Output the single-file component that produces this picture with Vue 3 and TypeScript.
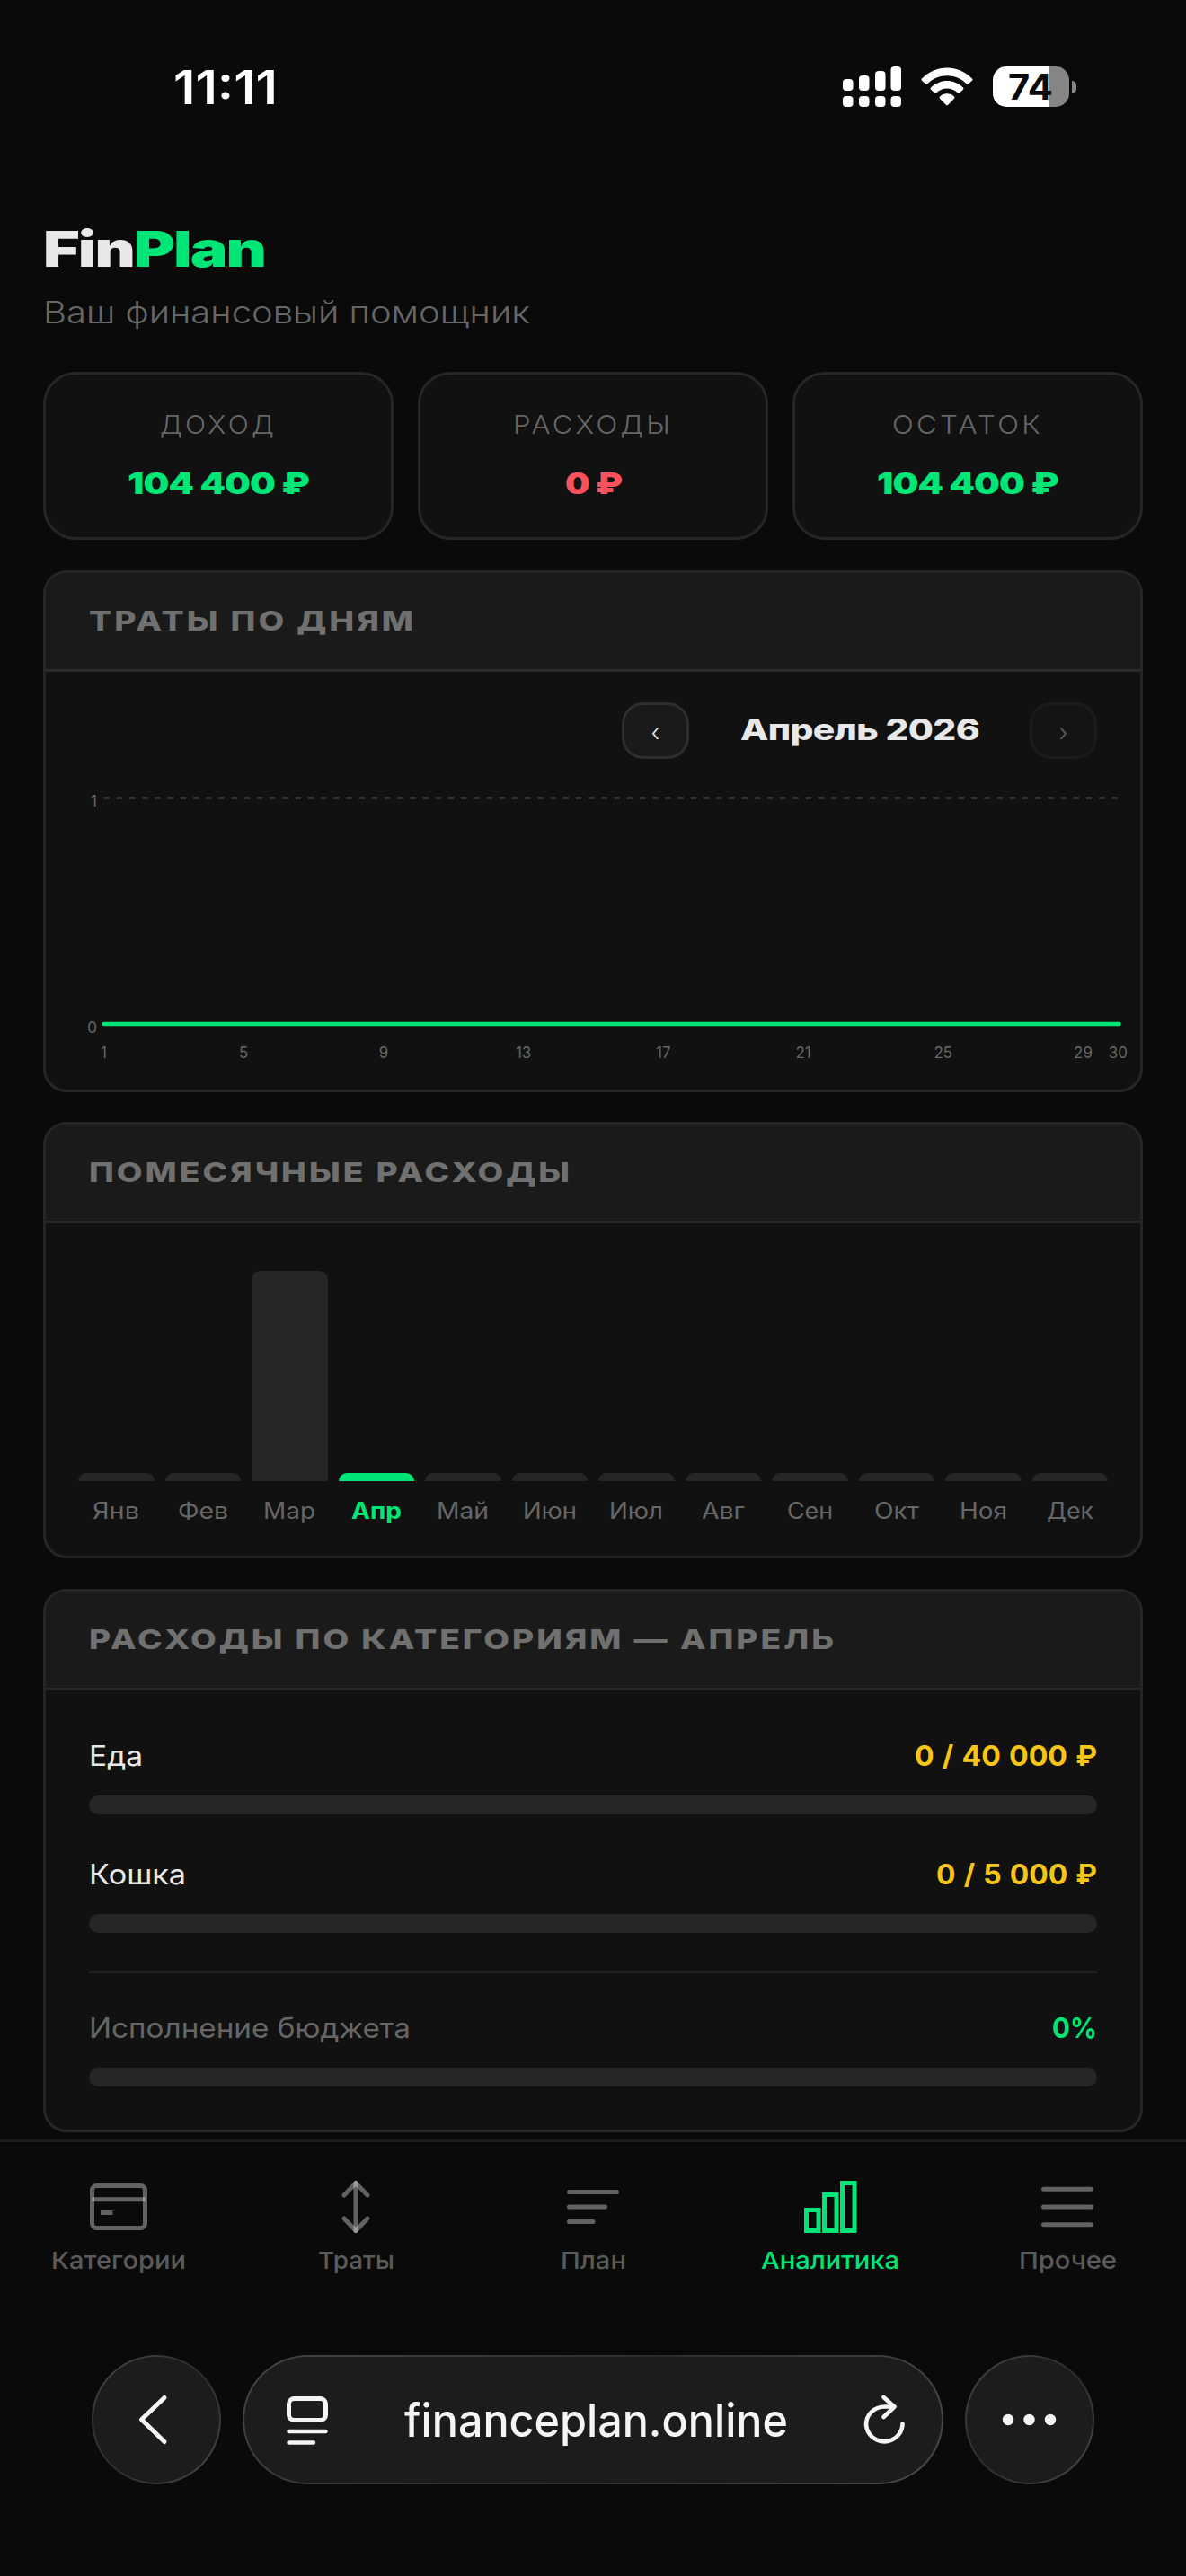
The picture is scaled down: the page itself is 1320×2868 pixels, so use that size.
<script setup lang="ts">
import type { Directive } from 'vue'

interface Stat { label: string; labelWidth: number; value: string; valueWidth: number; tone: 'good' | 'bad' }
interface Month { name: string; width: number; height: number; active?: boolean }
interface Budget { name: string; nameWidth: number; value: string; valueWidth: number }

// Stretches a line of text horizontally so that it occupies the given advance width.
const vFit: Directive<HTMLElement, number> = {
  mounted(el, binding) {
    const natural = el.getBoundingClientRect().width
    if (!natural) return
    el.style.transform = `scaleX(${binding.value / natural})`
    el.style.marginRight = `${binding.value - natural}px`
  },
}

const stats: Stat[] = [
  { label: 'ДОХОД', labelWidth: 130, value: '104\u00a0400\u00a0₽', valueWidth: 202, tone: 'good' },
  { label: 'РАСХОДЫ', labelWidth: 178, value: '0\u00a0₽', valueWidth: 63, tone: 'bad' },
  { label: 'ОСТАТОК', labelWidth: 168, value: '104\u00a0400\u00a0₽', valueWidth: 202, tone: 'good' },
]

const days = [1, 5, 9, 13, 17, 21, 25, 29, 30]
const dayX = (d: number): number => 115.5 + (d - 1) * 38.93

const months: Month[] = [
  { name: 'Янв', width: 52, height: 9 },
  { name: 'Фев', width: 56, height: 9 },
  { name: 'Мар', width: 58, height: 234 },
  { name: 'Апр', width: 56, height: 9, active: true },
  { name: 'Май', width: 58, height: 9 },
  { name: 'Июн', width: 60, height: 9 },
  { name: 'Июл', width: 60, height: 9 },
  { name: 'Авг', width: 48, height: 9 },
  { name: 'Сен', width: 51, height: 9 },
  { name: 'Окт', width: 50, height: 9 },
  { name: 'Ноя', width: 53, height: 9 },
  { name: 'Дек', width: 52, height: 9 },
]

const budgets: Budget[] = [
  { name: 'Еда', nameWidth: 60, value: '0 / 40 000 ₽', valueWidth: 203 },
  { name: 'Кошка', nameWidth: 108, value: '0 / 5 000 ₽', valueWidth: 179 },
]
</script>

<template>
  <div class="screen">
    <div class="status">
      <span v-fit="116" class="fit time">11:11</span>
      <div class="status-icons">
        <svg width="65" height="45" viewBox="0 0 65 45" fill="#fff">
          <rect x="0" y="14" width="11.5" height="13" rx="4" />
          <rect x="18" y="10" width="11.5" height="17" rx="4" />
          <rect x="36" y="5" width="11.5" height="22" rx="4" />
          <rect x="53.5" y="0" width="11.5" height="27" rx="4" />
          <rect x="0" y="33" width="11.5" height="12" rx="4" />
          <rect x="18" y="33" width="11.5" height="12" rx="4" />
          <rect x="36" y="33" width="11.5" height="12" rx="4" />
          <rect x="53.5" y="33" width="11.5" height="12" rx="4" />
        </svg>
        <svg class="wifi" width="58" height="43" viewBox="0 0 58 43" fill="#fff">
          <path d="M1 12.6 C16.5 -3.4 41.5 -3.4 57 12.6 Q58 13.7 57 14.8 L52.8 18.4 Q51.8 19.2 50.8 18.3 C38.500 6.300 19.500 6.300 7.200 18.300 Q6.200 19.200 5.200 18.400 L1 14.800 Q0 13.700 1 12.600 Z" />
          <path d="M11 22.600 C21.200 12.400 36.800 12.400 47 22.600 Q48 23.700 47 24.800 L43 28.300 Q42 29.200 40.900 28.300 C34 22 24 22 17.100 28.300 Q16 29.200 15 28.300 L11 24.800 Q10 23.700 11 22.600 Z" />
          <path d="M21 32.500 C25.500 28.300 32.500 28.300 37 32.500 Q38 33.600 37 34.700 L30.200 41.700 Q29 42.900 27.800 41.700 L21 34.700 Q20 33.600 21 32.500 Z" />
        </svg>
        <div class="battery">
          <div class="battery-body"><span v-fit="50" class="fit battery-text">74</span></div>
          <div class="battery-cap"></div>
        </div>
      </div>
    </div>

    <header class="head">
      <div class="logo"><span v-fit="101" class="fit">Fin</span><span v-fit="146" class="fit green">Plan</span></div>
      <div class="tagline"><span v-fit="542" class="fit">Ваш финансовый помощник</span></div>
    </header>

    <main class="content">
      <div class="stats">
        <div v-for="s in stats" :key="s.label" class="stat">
          <div class="stat-label"><span v-fit="s.labelWidth" class="fit">{{ s.label }}</span></div>
          <div class="stat-value" :class="s.tone"><span v-fit="s.valueWidth" class="fit">{{ s.value }}</span></div>
        </div>
      </div>

      <section class="panel daily">
        <div class="panel-head"><span v-fit="364" class="fit">ТРАТЫ ПО ДНЯМ</span></div>
        <div class="month-nav">
          <button class="step">‹</button>
          <span class="month"><span v-fit="266" class="fit">Апрель 2026</span></span>
          <button class="step off">›</button>
        </div>
        <svg class="line-chart" width="1218" height="343" viewBox="51 870 1218 343">
          <line x1="115.500" y1="888.500" x2="1246" y2="888.500" stroke="#333" stroke-width="3" stroke-dasharray="6.500 7.700" />
          <line x1="115.500" y1="1140" x2="1245.500" y2="1140" stroke="#00e676" stroke-width="4.500" stroke-linecap="round" />
          <text x="108" y="897.500" text-anchor="end">1</text>
          <text x="108" y="1149.500" text-anchor="end">0</text>
          <text v-for="d in days" :key="d" :x="dayX(d)" y="1177.500" text-anchor="middle">{{ d }}</text>
        </svg>
      </section>

      <section class="panel monthly">
        <div class="panel-head"><span v-fit="538" class="fit">ПОМЕСЯЧНЫЕ РАСХОДЫ</span></div>
        <div class="bars">
          <div v-for="m in months" :key="m.name" class="bar-col" :class="{ active: m.active }">
            <div class="bar" :style="{ height: m.height + 'px' }"></div>
            <div class="bar-label"><span v-fit="m.width" class="fit">{{ m.name }}</span></div>
          </div>
        </div>
      </section>

      <section class="panel budget">
        <div class="panel-head"><span v-fit="832" class="fit">РАСХОДЫ ПО КАТЕГОРИЯМ — АПРЕЛЬ</span></div>
        <div class="budget-body">
          <div v-for="b in budgets" :key="b.name" class="budget-item">
            <div class="row">
              <span v-fit="b.nameWidth" class="fit">{{ b.name }}</span>
              <span v-fit="b.valueWidth" class="fit amount">{{ b.value }}</span>
            </div>
            <div class="track"></div>
          </div>
          <div class="total">
            <div class="row">
              <span v-fit="358" class="fit muted">Исполнение бюджета</span>
              <span v-fit="50" class="fit percent">0%</span>
            </div>
            <div class="track"></div>
          </div>
        </div>
      </section>
    </main>

    <nav class="tabs">
      <div class="tab">
        <svg viewBox="0 0 66 66"><rect x="3.500" y="9.500" width="59" height="47" rx="5" /><path d="M3.500 24.700H62.500M13 39.600H26.500" /></svg>
        <span v-fit="150" class="fit">Категории</span>
      </div>
      <div class="tab">
        <svg viewBox="0 0 66 66" stroke-linecap="round"><path d="M33 6.500V59.500" /><path d="M20 20L33 6.500L46 20" stroke-linejoin="round" /><path d="M20 46L33 59.500L46 46" stroke-linejoin="round" /></svg>
        <span v-fit="85" class="fit">Траты</span>
      </div>
      <div class="tab">
        <svg viewBox="0 0 66 66" stroke-linecap="round"><path d="M6.500 16.500H59.500M6.500 33H46.500M6.500 49.500H33" /></svg>
        <span v-fit="73" class="fit">План</span>
      </div>
      <div class="tab active">
        <svg viewBox="0 0 66 66"><rect x="6.500" y="36.500" width="13.500" height="23" /><rect x="26.500" y="19.500" width="13.500" height="40" /><rect x="46.500" y="6.500" width="13.500" height="53" /></svg>
        <span v-fit="154" class="fit">Аналитика</span>
      </div>
      <div class="tab">
        <svg viewBox="0 0 66 66" stroke-linecap="round"><path d="M6.500 13.300H59.500M6.500 33H59.500M6.500 52.700H59.500" /></svg>
        <span v-fit="109" class="fit">Прочее</span>
      </div>
    </nav>

    <div class="browser">
      <div class="glass round">
        <svg width="144" height="144" viewBox="0 0 144 144"><path d="M81 47.500L55.500 71.700L81 96.500" stroke-width="5" /></svg>
      </div>
      <div class="glass pill">
        <svg width="46" height="56" viewBox="0 0 46 56">
          <rect x="2.500" y="4.500" width="41" height="24" rx="6" stroke-width="5" />
          <path d="M2.500 41H43.500M2.500 53.500H30" stroke-width="4.500" />
        </svg>
        <span v-fit="427" class="fit url">financeplan.online</span>
        <svg width="46" height="56" viewBox="0 0 46 56">
          <path d="M33 13.500H24C11.500 13.500 3 22.500 3 33.500A20.300 20.300 0 0 0 43.500 33.500V32.500" stroke-width="4.600" />
          <path d="M22.500 3L34.500 13.500L22.500 25" stroke-width="4.600" />
        </svg>
      </div>
      <div class="glass round">
        <svg width="144" height="144" viewBox="0 0 144 144" class="dots"><circle cx="48" cy="72" r="6.200" /><circle cx="71.500" cy="72" r="6.200" /><circle cx="95" cy="72" r="6.200" /></svg>
      </div>
    </div>
  </div>
</template>

<style>
body {
  background: #0a0a0a;
}
</style>

<style scoped>
.screen {
  width: 1320px;
  height: 2868px;
  overflow: hidden;
  background: #0a0a0a;
  color: #e8e8e8;
  font-family: Inter, 'Noto Sans', 'Liberation Sans', sans-serif;
}
.screen * {
  box-sizing: border-box;
}
.fit {
  display: inline-block;
  white-space: pre;
  transform-origin: 0 50%;
}
svg {
  display: block;
  fill: none;
}
.status {
  height: 196px;
  padding: 0 122px 0 193px;
  display: flex;
  align-items: center;
  justify-content: space-between;
}
.time {
  color: #fff;
  font-size: 52px;
  font-weight: 600;
  line-height: 64px;
}
.status-icons {
  display: flex;
  align-items: center;
  height: 45px;
  margin-top: -3px;
}
.status-icons svg {
  fill: #fff;
}
.wifi {
  margin: 0 22px;
}
.battery {
  display: flex;
  align-items: center;
  gap: 3px;
}
.battery-body {
  width: 85px;
  height: 45px;
  padding-left: 17px;
  border-radius: 15px;
  background: linear-gradient(90deg, #fff 63px, #858585 63px);
  color: #0a0a0a;
  line-height: 45px;
}
.battery-text {
  font-size: 40px;
  font-weight: 700;
}
.battery-cap {
  width: 5px;
  height: 14px;
  border-radius: 0 5px 5px 0;
  background: #858585;
}
.head {
  padding: 48px 48px 0;
}
.logo {
  display: flex;
  height: 66px;
  font-size: 55px;
  font-weight: 900;
  line-height: 66px;
  letter-spacing: -1.5px;
}
.green {
  color: #00e676;
}
.tagline {
  height: 44px;
  margin-top: 16px;
  color: #666;
  font-size: 34px;
  font-weight: 300;
  line-height: 44px;
}
.content {
  padding: 44px 48px 0;
}
.stats {
  display: grid;
  grid-template-columns: repeat(3, 1fr);
  gap: 27px;
}
.stat {
  height: 187px;
  padding-top: 38px;
  border: 3px solid #262626;
  border-radius: 36px;
  background: #111;
  text-align: center;
}
.stat-label {
  height: 36px;
  color: #666;
  font-size: 29px;
  font-weight: 300;
  line-height: 36px;
  letter-spacing: 3px;
}
.stat-value {
  height: 40px;
  margin-top: 27px;
  font-size: 33px;
  font-weight: 900;
  line-height: 40px;
  letter-spacing: -0.7px;
}
.good {
  color: #00e676;
}
.bad {
  color: #f9525c;
}
.panel {
  margin-top: 34px;
  border: 3px solid #262626;
  border-radius: 26px;
  background: #111;
  overflow: hidden;
}
.daily {
  height: 581px;
}
.monthly {
  height: 486px;
  margin-top: 33px;
}
.budget {
  height: 605px;
}
.panel-head {
  height: 110px;
  padding-left: 48px;
  border-bottom: 3px solid #2a2a2a;
  background: #1a1a1a;
  color: #707070;
  font-size: 30px;
  font-weight: 800;
  line-height: 107px;
  letter-spacing: 2.4px;
}
.month-nav {
  display: flex;
  align-items: center;
  justify-content: flex-end;
  height: 97px;
  padding: 34px 48px 0 0;
}
.step {
  width: 75px;
  height: 63px;
  padding: 4px 0 0;
  border: 3px solid #2e2e2e;
  border-radius: 24px;
  background: #1a1a1a;
  color: #e8e8e8;
  font: 300 27px/52px Inter, sans-serif;
}
.step.off {
  opacity: 0.35;
}
.month {
  width: 379px;
  margin-top: -3px;
  font-size: 33px;
  font-weight: 800;
  line-height: 40px;
  letter-spacing: -0.5px;
  text-align: center;
}
.line-chart {
  margin-top: 25px;
}
.line-chart text {
  fill: #666;
  font-size: 17px;
  font-weight: 400;
}
.bars {
  display: grid;
  grid-template-columns: repeat(12, 1fr);
  gap: 12px;
  padding: 53px 36px 0;
}
.bar-col {
  display: flex;
  flex-direction: column;
  justify-content: flex-end;
  height: 285px;
}
.bar {
  border-radius: 9px 9px 0 0;
  background: #262626;
}
.bar-label {
  height: 36px;
  margin-top: 15px;
  color: #666;
  font-size: 25px;
  font-weight: 400;
  line-height: 36px;
  text-align: center;
}
.active .bar {
  background: #00e676;
}
.active .bar-label {
  color: #00e676;
  font-weight: 700;
}
.budget-body {
  padding: 51px 48px 0;
}
.row {
  display: flex;
  justify-content: space-between;
  height: 44px;
  font-size: 31px;
  line-height: 44px;
}
.budget-item + .budget-item {
  margin-top: 45px;
}
.track {
  height: 21px;
  margin-top: 22px;
  border-radius: 11px;
  background: #262626;
}
.amount {
  color: #f5c518;
  font-weight: 700;
  word-spacing: 1.5px;
}
.total {
  margin-top: 42px;
  padding-top: 39px;
  border-top: 3px solid #222;
}
.muted {
  color: #666;
}
.percent {
  color: #00e676;
  font-weight: 700;
}
.tabs {
  display: grid;
  grid-template-columns: repeat(5, 1fr);
  height: 240px;
  margin-top: 8px;
  padding-top: 39px;
  border-top: 3px solid #1c1c1c;
}
.tab {
  display: flex;
  flex-direction: column;
  align-items: center;
  color: #5a5a5a;
  font-size: 26px;
  font-weight: 500;
  line-height: 34px;
}
.tab svg {
  width: 66px;
  height: 66px;
  margin-bottom: 10px;
  stroke: rgba(255, 255, 255, 0.36);
  stroke-width: 5px;
}
.tab.active {
  color: #00e676;
}
.tab.active svg {
  stroke: #00e676;
}
.browser {
  display: flex;
  gap: 24px;
  padding: 0 102px;
}
.glass {
  height: 144px;
  border-radius: 72px;
  background:
    linear-gradient(#1c1c1c, #1c1c1c) padding-box,
    linear-gradient(135deg, #454545, #2c2c2c 50%, #4a4a4a) border-box;
  border: 2px solid transparent;
}
.glass svg {
  flex: none;
  stroke: #f5f5f5;
  stroke-linecap: round;
  stroke-linejoin: round;
}
.round {
  display: flex;
  align-items: center;
  justify-content: center;
  width: 144px;
}
.glass .dots {
  fill: #f5f5f5;
  stroke: none;
}
.pill {
  display: flex;
  flex: 1;
  align-items: center;
  justify-content: space-between;
  padding: 0 41px 0 47px;
}
.url {
  color: #f5f5f5;
  font-size: 51px;
  font-weight: 500;
  line-height: 60px;
  margin-top: 2px;
}
</style>
